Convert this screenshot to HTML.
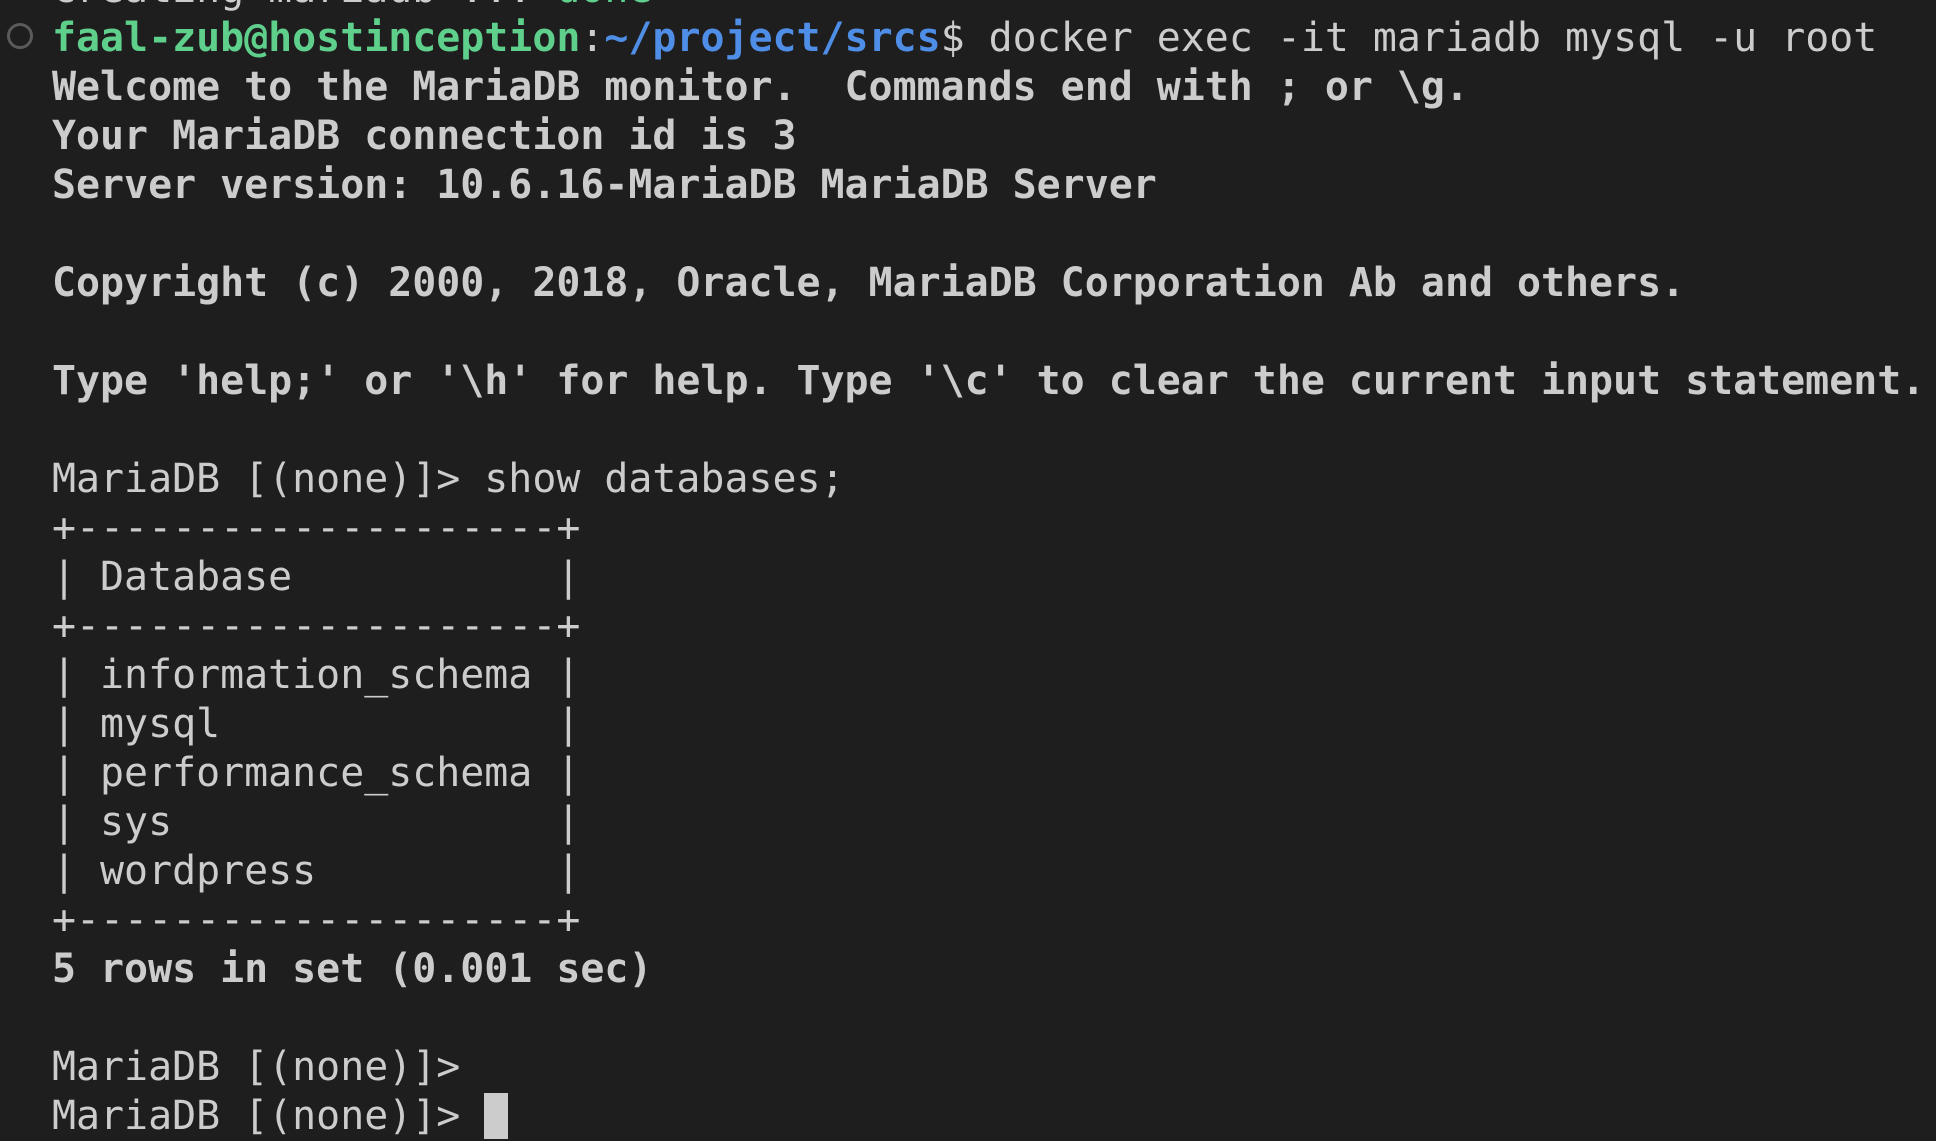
<!DOCTYPE html>
<html><head><style>
html,body{margin:0;padding:0;background:#1e1e1e;width:1936px;height:1100px;overflow:hidden}
pre{position:absolute;left:52px;top:-35px;margin:0;font-family:"DejaVu Sans Mono","Liberation Mono",monospace;font-size:39.9px;line-height:49px;color:#cccccc;white-space:pre}
b{font-weight:bold}
.g{color:#5fcf8c}.bl{color:#4f8ee6}
.cur{background:#cccccc}
.circ{position:absolute;left:7px;top:23px;border:3.5px solid #5a5a5a;border-radius:50%;box-sizing:border-box;width:26px;height:26px}
</style></head><body>
<div class="circ"></div>
<pre>Creating mariadb ... <span class="g">done</span>
<b class="g">faal-zub@hostinception</b>:<b class="bl">~/project/srcs</b>$ docker exec -it mariadb mysql -u root
<b>Welcome to the MariaDB monitor.  Commands end with ; or \g.</b>
<b>Your MariaDB connection id is 3</b>
<b>Server version: 10.6.16-MariaDB MariaDB Server</b>

<b>Copyright (c) 2000, 2018, Oracle, MariaDB Corporation Ab and others.</b>

<b>Type 'help;' or '\h' for help. Type '\c' to clear the current input statement.</b>

MariaDB [(none)]&gt; show databases;
+--------------------+
| Database           |
+--------------------+
| information_schema |
| mysql              |
| performance_schema |
| sys                |
| wordpress          |
+--------------------+
<b>5 rows in set (0.001 sec)</b>

MariaDB [(none)]&gt;
MariaDB [(none)]&gt; <span class="cur"> </span></pre>
</body></html>
